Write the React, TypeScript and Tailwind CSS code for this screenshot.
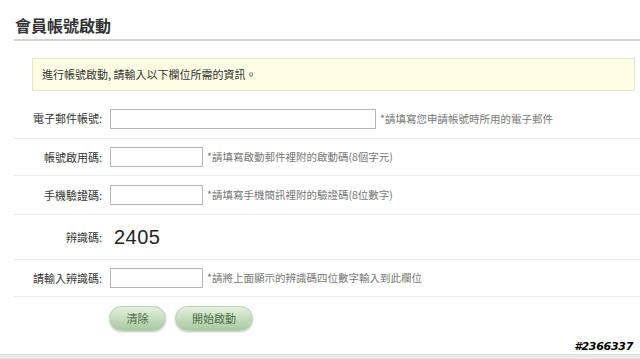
const rows = [
  { label: "電子郵件帳號:", wide: true, hint: "*請填寫您申請帳號時所用的電子郵件" },
  { label: "帳號啟用碼:", wide: false, hint: "*請填寫啟動郵件裡附的啟動碼(8個字元)" },
  { label: "手機驗證碼:", wide: false, hint: "*請填寫手機簡訊裡附的驗證碼(8位數字)" },
];

const cjk = { fontFamily: '"Noto Sans CJK TC", "Liberation Sans", sans-serif' };

const Label = ({ text }: { text: string }) => (
  <div className="w-[90px] text-right text-[11px] text-[#333] pr-[2px]">{text}</div>
);

const App = () => {
  return (
    <div className="w-[640px] h-[359px] bg-white relative overflow-hidden" style={cjk}>
      <div className="pl-[15px] pt-[13px] pb-[2px] text-[16px] font-bold text-[#333] leading-[24px]">
        會員帳號啟動
      </div>
      <div className="ml-[14px] h-[2px] bg-[#d4d4d4]" />

      <div className="ml-[32px] mr-[5px] mt-[17px] h-[33px] flex items-center pl-[9px] bg-[#fffde3] border border-[#e6e6cf] text-[11px] text-[#333]">
        進行帳號啟動, 請輸入以下欄位所需的資訊。
      </div>

      <div className="ml-[14px] mt-[8px]">
        {rows.map((r, i) => (
          <div
            key={i}
            className={`flex items-center border-b border-[#ececec] ${i === 0 ? "h-[40px]" : i === 1 ? "h-[37px]" : "h-[39px]"}`}
          >
            <Label text={r.label} />
            <div
              className={`ml-[6px] h-[20px] border border-[#b5b5b5] bg-white ${r.wide ? "w-[266px]" : "w-[93px]"}`}
            />
            <div className="ml-[4px] text-[10.5px] text-[#777]">{r.hint}</div>
          </div>
        ))}
        <div className="flex items-center h-[45px] border-b border-[#ececec]">
          <Label text="辨識碼:" />
          <div
            className="ml-[10px] text-[20px] text-[#222] tracking-[0.5px]"
            style={{ fontFamily: '"Liberation Sans", Arial, sans-serif' }}
          >
            2405
          </div>
        </div>
        <div className="flex items-center h-[37px] border-b border-[#ececec]">
          <Label text="請輸入辨識碼:" />
          <div className="ml-[6px] h-[20px] w-[93px] border border-[#b5b5b5] bg-white" />
          <div className="ml-[4px] text-[10.5px] text-[#777]">*請將上面顯示的辨識碼四位數字輸入到此欄位</div>
        </div>
        <div className="flex items-center gap-[9px] pl-[95px] pt-[9px]">
          <button className="w-[57px] h-[25px] rounded-full bg-gradient-to-b from-[#e3f0de] to-[#a9c9a1] border border-[#b9d0b3] shadow-[0_1px_2px_rgba(0,0,0,0.25)] text-[11px] text-[#4d6d48]">
            清除
          </button>
          <button className="w-[78px] h-[25px] rounded-full bg-gradient-to-b from-[#e3f0de] to-[#a9c9a1] border border-[#b9d0b3] shadow-[0_1px_2px_rgba(0,0,0,0.25)] text-[11px] text-[#4d6d48]">
            開始啟動
          </button>
        </div>
      </div>

      <div className="absolute left-0 right-0 bottom-0 h-[5px] bg-[#ebebeb] border-t border-[#dcdcdc]" />
      <div
        className="absolute right-[7px] bottom-[6px] text-[11px] leading-[12px] font-bold italic text-black tracking-[-0.3px]"
        style={{ fontFamily: '"DejaVu Sans", sans-serif', textShadow: "0 0 1px #fff, 1px 1px 0 #fff" }}
      >
        #2366337
      </div>
    </div>
  );
};

export default App;
